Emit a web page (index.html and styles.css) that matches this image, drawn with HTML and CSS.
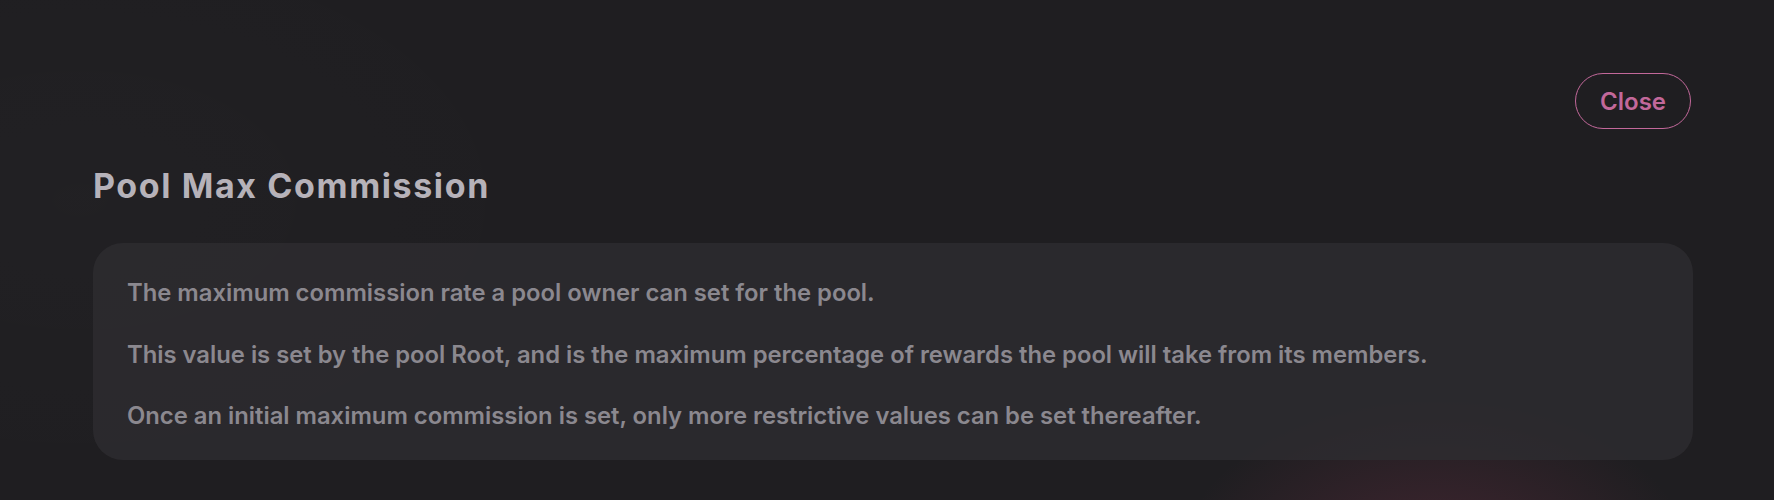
FILE: index.html
```html
<!DOCTYPE html>
<html lang="en">
<head>
<meta charset="utf-8">
<title>Pool Max Commission</title>
<link rel="stylesheet" href="styles.css">
</head>
<body>
  <div class="glow"></div>
  <div class="modal">
    <div class="modal-header">
      <button class="close-btn" type="button">Close</button>
    </div>
    <h2 class="modal-title">Pool Max Commission</h2>
    <div class="card">
      <p>The maximum commission rate a pool owner can set for the pool.</p>
      <p>This value is set by the pool Root, and is the maximum percentage of rewards the pool will take from its members.</p>
      <p>Once an initial maximum commission is set, only more restrictive values can be set thereafter.</p>
    </div>
  </div>
</body>
</html>
```
FILE: styles.css
```css
* { box-sizing: border-box; }
html, body {
  margin: 0;
  height: 500px;
  overflow: hidden;
}
body {
  position: relative;
  background: #1f1e21;
  font-family: Inter, "Noto Sans", sans-serif;
}
.glow {
  position: absolute;
  inset: 0;
  pointer-events: none;
  background:
    radial-gradient(ellipse 260px 170px at 1435px 570px, rgba(125, 50, 75, 0.38), rgba(125, 50, 75, 0) 100%),
    radial-gradient(ellipse 500px 300px at 80px 200px, rgba(255, 255, 255, 0.012), rgba(255, 255, 255, 0) 100%);
}
.modal {
  position: relative;
  padding: 73px 81px 0 93px;
}
.modal-header {
  display: flex;
  justify-content: flex-end;
  margin-right: 2px;
}
.close-btn {
  height: 56px;
  padding: 0 24px;
  border: 1.5px solid #c2689a;
  border-radius: 28px;
  background: transparent;
  color: #c2689a;
  font-family: Inter, "Noto Sans", sans-serif;
  font-size: 24px;
  font-weight: 600;
  cursor: pointer;
}
.modal-title {
  margin: 37px 0 0;
  font-size: 34px;
  line-height: 40px;
  font-weight: 700;
  color: #b6b2b9;
  letter-spacing: 1.6px;
}
.card {
  margin-top: 37px;
  background: rgba(46, 45, 49, 0.78);
  border-radius: 30px;
  padding: 32px 34px 26px;
  display: flex;
  flex-direction: column;
  gap: 25.5px;
}
.card p {
  margin: 0;
  font-size: 23.8px;
  line-height: 36px;
  font-weight: 600;
  color: #8b888f;
}
```
